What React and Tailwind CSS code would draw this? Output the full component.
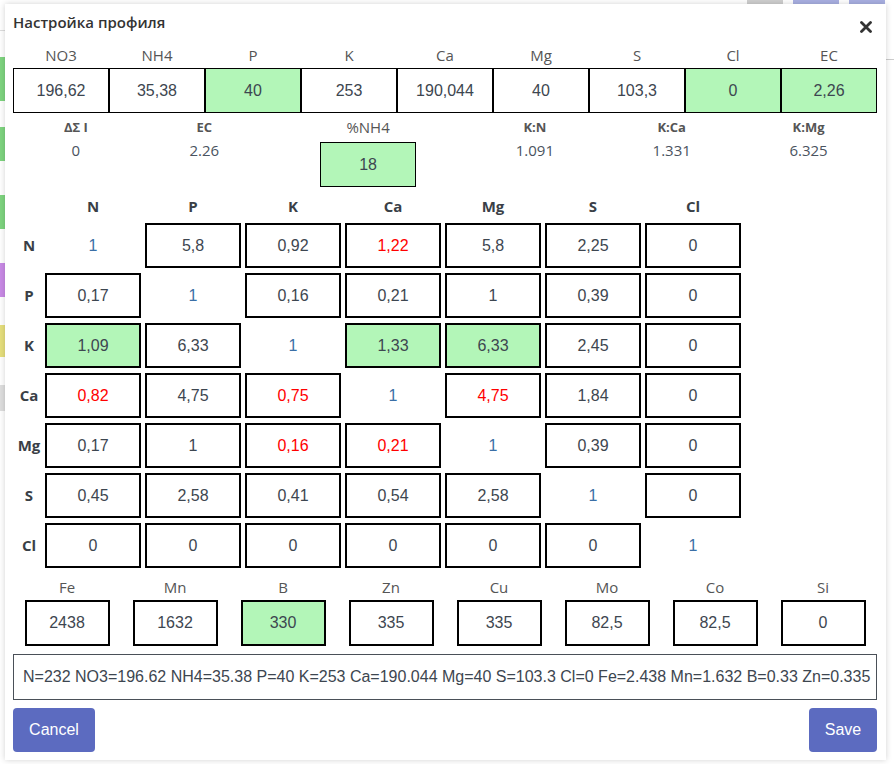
import React from "react";

const G = "bg-[#b3f6b8]";

const top = [
  ["NO3", "196,62", false],
  ["NH4", "35,38", false],
  ["P", "40", true],
  ["K", "253", false],
  ["Ca", "190,044", false],
  ["Mg", "40", false],
  ["S", "103,3", false],
  ["Cl", "0", true],
  ["EC", "2,26", true],
];

const heads = ["N", "P", "K", "Ca", "Mg", "S", "Cl"];

const matrix = [
  [["1", "d"], ["5,8", "n"], ["0,92", "n"], ["1,22", "r"], ["5,8", "n"], ["2,25", "n"], ["0", "n"]],
  [["0,17", "n"], ["1", "d"], ["0,16", "n"], ["0,21", "n"], ["1", "n"], ["0,39", "n"], ["0", "n"]],
  [["1,09", "g"], ["6,33", "n"], ["1", "d"], ["1,33", "g"], ["6,33", "g"], ["2,45", "n"], ["0", "n"]],
  [["0,82", "r"], ["4,75", "n"], ["0,75", "r"], ["1", "d"], ["4,75", "r"], ["1,84", "n"], ["0", "n"]],
  [["0,17", "n"], ["1", "n"], ["0,16", "r"], ["0,21", "r"], ["1", "d"], ["0,39", "n"], ["0", "n"]],
  [["0,45", "n"], ["2,58", "n"], ["0,41", "n"], ["0,54", "n"], ["2,58", "n"], ["1", "d"], ["0", "n"]],
  [["0", "n"], ["0", "n"], ["0", "n"], ["0", "n"], ["0", "n"], ["0", "n"], ["1", "d"]],
];

const micro = [
  ["Fe", "2438", false],
  ["Mn", "1632", false],
  ["B", "330", true],
  ["Zn", "335", false],
  ["Cu", "335", false],
  ["Mo", "82,5", false],
  ["Co", "82,5", false],
  ["Si", "0", false],
];

const sans = "font-['Open_Sans',sans-serif]";
const arial = "font-['Liberation_Sans',Arial,sans-serif]";

function Cell({ v, s }) {
  if (s === "d") {
    return (
      <div className={`h-[45px] flex items-center justify-center ${arial} text-[16px] text-[#3b6fa6]`}>
        {v}
      </div>
    );
  }
  const bg = s === "g" ? G : "bg-white";
  const color = s === "r" ? "text-[#ff0000]" : "text-[#3d4650]";
  return (
    <div className={`h-[45px] border-2 border-black ${bg} flex items-center justify-center ${arial} text-[16px] ${color}`}>
      {v}
    </div>
  );
}

export default function App() {
  return (
    <div className="relative w-[894px] h-[764px] overflow-hidden bg-white">
      {/* background page */}
      <div className="flex h-full">
        <div className="w-[5px] flex flex-col overflow-hidden">
          <div className="h-[30px]" />
          <div className="h-px bg-[#ddd]" />
          <div className="h-[26px]" />
          <div className="h-[44px] bg-[#7ed47f]" />
          <div className="h-[26px]" />
          <div className="h-[34px] bg-[#7ed47f]" />
          <div className="h-[34px]" />
          <div className="h-[34px] bg-[#7ed47f]" />
          <div className="h-[34px]" />
          <div className="h-[34px] bg-[#c98ae6]" />
          <div className="h-[28px]" />
          <div className="h-[32px] bg-[#e6df7c]" />
          <div className="h-[28px]" />
          <div className="h-[26px] bg-[#dedede]" />
        </div>
        <div className="flex-1" />
        <div className="w-[160px] flex flex-col">
          <div className="h-[30px] flex gap-[10px] justify-end pr-[9px]">
            <div className="w-[36px] bg-[#cfcfcf]" />
            <div className="w-[46px] bg-[#a9b0e2]" />
            <div className="w-[36px] bg-[#a9b0e2]" />
          </div>
          <div className="h-[30px] border-b border-[#ccc]" />
        </div>
      </div>

      {/* modal */}
      <div className="absolute left-[5px] top-[4px] w-[881px] h-[756px] bg-white shadow-[0_0_6px_rgba(0,0,0,0.18)] pl-2 pr-[9px] flex flex-col">
        {/* header */}
        <div className="h-[40px] flex justify-between items-start">
          <div className={`pt-[8px] leading-[20px] text-[15px] font-semibold text-[#333] ${sans}`}>
            Настройка профиля
          </div>
          <div className="mt-[17px] mr-[5px]">
            <svg width="12" height="12" viewBox="0 0 12 12">
              <path d="M1.5 1.5 L10.5 10.5 M10.5 1.5 L1.5 10.5" stroke="#333" strokeWidth="2.8" strokeLinecap="round" />
            </svg>
          </div>
        </div>

        {/* top macro row */}
        <div className="grid grid-cols-9">
          {top.map(([l]) => (
            <div key={l} className={`h-[22px] leading-[22px] text-center text-[15px] text-[#555] ${sans}`}>
              {l}
            </div>
          ))}
        </div>
        <div className="grid grid-cols-9 mt-[2px]">
          {top.map(([l, v, g]) => (
            <div
              key={l}
              className={`h-[45px] border border-black ${g ? G : "bg-white"} flex items-center justify-center ${arial} text-[16px] text-[#3d4650]`}
            >
              {v}
            </div>
          ))}
        </div>

        {/* stats */}
        <div className="flex justify-around mt-[4px]">
          {[
            ["ΔΣ I", "0", "w-[25px]"],
            ["EC", "2.26", "w-[30px]"],
          ].map(([l, v, w]) => (
            <div key={l} className={`${w} flex flex-col items-center`}>
              <div className={`h-[20px] leading-[20px] whitespace-nowrap text-[13px] font-bold text-[#555] ${sans}`}>{l}</div>
              <div className={`mt-[3px] h-[20px] leading-[20px] text-[15px] text-[#4a5360] ${sans}`}>{v}</div>
            </div>
          ))}
          <div className="w-[96px] flex flex-col items-center">
            <div className={`h-[20px] leading-[20px] text-[15px] text-[#555] ${sans}`}>%NH4</div>
            <div className={`mt-[5px] w-[96px] h-[45px] border border-black ${G} flex items-center justify-center ${arial} text-[16px] text-[#3d4650]`}>
              18
            </div>
          </div>
          {[
            ["K:N", "1.091"],
            ["K:Ca", "1.331"],
            ["K:Mg", "6.325"],
          ].map(([l, v]) => (
            <div key={l} className="w-[36px] flex flex-col items-center">
              <div className={`h-[20px] leading-[20px] whitespace-nowrap text-[13px] font-bold text-[#555] ${sans}`}>{l}</div>
              <div className={`mt-[3px] h-[20px] leading-[20px] text-[15px] text-[#4a5360] ${sans}`}>{v}</div>
            </div>
          ))}
        </div>

        {/* matrix */}
        <div className="mt-[9px] grid grid-cols-[28px_repeat(7,96px)] gap-x-[4px] gap-y-[5px] w-[700px]">
          <div className="h-[20px]" />
          {heads.map((h) => (
            <div key={h} className={`h-[20px] mb-[2px] leading-[20px] text-center text-[15px] font-bold text-[#3a3f47] ${sans}`}>
              {h}
            </div>
          ))}
          {matrix.map((row, i) => (
            <React.Fragment key={i}>
              <div className={`h-[45px] pl-[4px] flex items-center justify-center text-[15px] font-bold text-[#3a3f47] ${sans}`}>
                {heads[i]}
              </div>
              {row.map(([v, s], j) => (
                <Cell key={j} v={v} s={s} />
              ))}
            </React.Fragment>
          ))}
        </div>

        {/* micro */}
        <div className="grid grid-cols-8 mt-[9px]">
          {micro.map(([l]) => (
            <div key={l} className={`h-[20px] leading-[20px] text-center text-[15px] text-[#555] ${sans}`}>
              {l}
            </div>
          ))}
        </div>
        <div className="grid grid-cols-8 mt-[3px]">
          {micro.map(([l, v, g]) => (
            <div key={l} className="flex justify-center">
              <div className={`w-[85px] h-[46px] border-2 border-black ${g ? G : "bg-white"} flex items-center justify-center ${arial} text-[16px] text-[#3d4650]`}>
                {v}
              </div>
            </div>
          ))}
        </div>

        {/* text field */}
        <div className={`mt-[8px] h-[46px] border border-[#4a5058] flex items-center pl-[9px] overflow-hidden whitespace-nowrap ${arial} text-[16px] text-[#3d4650]`}>
          N=232 NO3=196.62 NH4=35.38 P=40 K=253 Ca=190.044 Mg=40 S=103.3 Cl=0 Fe=2.438 Mn=1.632 B=0.33 Zn=0.335
        </div>

        {/* buttons */}
        <div className="mt-[8px] flex justify-between">
          <div className={`h-[44px] w-[82px] rounded-[4px] bg-[#5c6bc0] flex items-center justify-center text-white text-[16px] ${arial}`}>
            Cancel
          </div>
          <div className={`h-[44px] w-[68px] rounded-[4px] bg-[#5c6bc0] flex items-center justify-center text-white text-[16px] ${arial}`}>
            Save
          </div>
        </div>
      </div>
    </div>
  );
}
